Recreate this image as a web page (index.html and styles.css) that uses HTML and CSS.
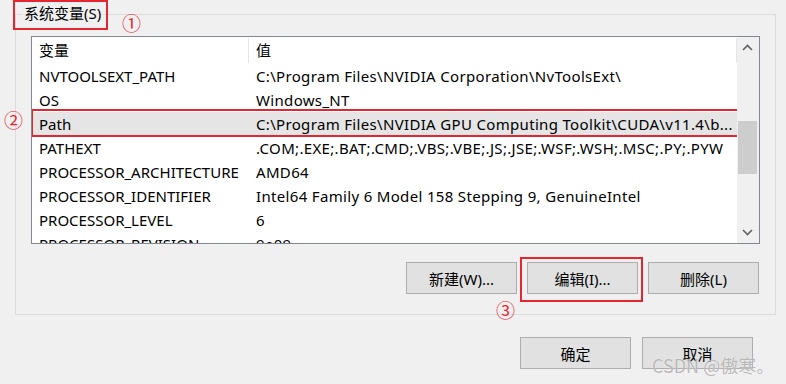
FILE: index.html
```html
<!DOCTYPE html>
<html lang="zh-CN">
<head>
    <meta charset="UTF-8">
    <meta name="viewport" content="width=device-width, initial-scale=1.0">
    <title>系统变量</title>
    <link rel="stylesheet" href="styles.css">
</head>
<body>
    <div class="janela">
        <!-- Grupo de variáveis do sistema -->
        <div class="grupo">
            <span class="titulo">系统变量(S)</span>
            <span class="marca marca-1">①</span>
            <span class="marca marca-2">②</span>

            <div class="lista">
                <div class="linhas">
                    <div class="cabecalho">
                        <div class="col-nome">变量</div>
                        <div class="col-valor">值</div>
                    </div>
                    <div class="linha"><div class="col-nome">NVTOOLSEXT_PATH</div><div class="col-valor">C:\Program Files\NVIDIA Corporation\NvToolsExt\</div></div>
                    <div class="linha"><div class="col-nome">OS</div><div class="col-valor">Windows_NT</div></div>
                    <div class="linha selecionada"><div class="col-nome">Path</div><div class="col-valor">C:\Program Files\NVIDIA GPU Computing Toolkit\CUDA\v11.4\b...</div></div>
                    <div class="linha"><div class="col-nome">PATHEXT</div><div class="col-valor">.COM;.EXE;.BAT;.CMD;.VBS;.VBE;.JS;.JSE;.WSF;.WSH;.MSC;.PY;.PYW</div></div>
                    <div class="linha"><div class="col-nome">PROCESSOR_ARCHITECTURE</div><div class="col-valor">AMD64</div></div>
                    <div class="linha"><div class="col-nome">PROCESSOR_IDENTIFIER</div><div class="col-valor">Intel64 Family 6 Model 158 Stepping 9, GenuineIntel</div></div>
                    <div class="linha"><div class="col-nome">PROCESSOR_LEVEL</div><div class="col-valor">6</div></div>
                    <div class="linha"><div class="col-nome">PROCESSOR_REVISION</div><div class="col-valor">9e09</div></div>
                </div>

                <!-- Barra de rolagem -->
                <div class="rolagem">
                    <svg class="seta" width="22" height="22" viewBox="0 0 22 22"><path d="M6 13 L10.5 8.5 L15 13" fill="none" stroke="#606060" stroke-width="1.6"/></svg>
                    <div class="polegar"></div>
                    <div class="espaco"></div>
                    <svg class="seta" width="22" height="22" viewBox="0 0 22 22"><path d="M6 9 L10.5 13.5 L15 9" fill="none" stroke="#606060" stroke-width="1.6"/></svg>
                </div>
            </div>

            <div class="botoes">
                <button>新建(W)...</button>
                <button class="destaque">编辑(I)...<span class="marca marca-3">③</span></button>
                <button>删除(L)</button>
            </div>
        </div>

        <div class="botoes-rodape">
            <button>确定</button>
            <button>取消</button>
        </div>

        <span class="marca-dagua">CSDN @傲寒。</span>
    </div>
</body>
</html>
```

FILE: styles.css
```css
/* Página */
body {
    margin: 0;
    background-color: #f0f0f0;
    font-family: "Noto Sans", "Noto Sans CJK SC", sans-serif;
    font-size: 15px;
    color: #000;
}

.janela {
    position: relative;
    width: 786px;
    height: 384px;
    overflow: hidden;
}

/* Caixa do grupo */
.grupo {
    position: relative;
    box-sizing: border-box;
    width: 761px;
    height: 301px;
    margin: 14px 0 0 15px;
    padding: 21px 15px 0 15px;
    border: 1px solid #dcdcdc;
}

.titulo {
    position: absolute;
    top: -12px;
    left: 7px;
    padding: 0 1px;
    background-color: #f0f0f0;
    line-height: 20px;
}

/* Marcações vermelhas */
.titulo::after {
    content: "";
    position: absolute;
    top: -3px;
    left: -10px;
    right: -6px;
    bottom: -7px;
    border: 2px solid #e3262f;
}

.marca {
    position: absolute;
    color: #e3262f;
    font-family: "Noto Sans CJK SC", sans-serif;
    font-size: 19px;
    line-height: 20px;
}

.marca-1 { top: -2px; left: 106px; }
.marca-2 { top: 95px; left: -12px; }
.marca-3 { top: 37px; left: -32px; }

/* Lista de variáveis */
.lista {
    display: flex;
    box-sizing: border-box;
    width: 729px;
    height: 208px;
    border: 1px solid #828790;
    background-color: #fff;
}

.linhas {
    width: 705px;
    height: 206px;
    overflow: hidden;
}

.cabecalho, .linha {
    display: grid;
    grid-template-columns: 217px 1fr;
    align-items: center;
    white-space: nowrap;
}

.cabecalho {
    height: 27px;
}

.cabecalho .col-nome, .cabecalho .col-valor {
    height: 25px;
    line-height: 25px;
    border-right: 1px solid #e5e5e5;
}

.linha {
    height: 24px;
}

.col-nome, .col-valor {
    padding-left: 7px;
    overflow: hidden;
}

.linha .col-valor {
    letter-spacing: 0.33px;
}

.selecionada {
    position: relative;
    background-color: #e5e5e5;
}

.selecionada::after {
    content: "";
    position: absolute;
    top: -3px;
    left: -1px;
    right: -3px;
    bottom: -1px;
    border: 2px solid #e3262f;
}

/* Barra de rolagem */
.rolagem {
    display: flex;
    flex-direction: column;
    width: 22px;
    background-color: #f0f0f0;
}

.seta {
    display: block;
    flex: none;
}

.polegar {
    height: 53px;
    margin: 62px 2px 0 1px;
    background-color: #cdcdcd;
}

.espaco {
    flex: 1;
}

/* Botões */
button {
    box-sizing: border-box;
    width: 111px;
    height: 32px;
    padding: 0;
    background-color: #e1e1e1;
    border: 1px solid #adadad;
    font-family: "Noto Sans", "Noto Sans CJK SC", sans-serif;
    font-size: 15px;
    color: #000;
}

.botoes {
    display: flex;
    justify-content: flex-end;
    gap: 10px;
    width: 728px;
    margin-top: 18px;
}

.destaque {
    position: relative;
}

.destaque::after {
    content: "";
    position: absolute;
    top: -6px;
    left: -8px;
    right: -6px;
    bottom: -9px;
    border: 2px solid #e3262f;
}

.botoes-rodape {
    display: flex;
    justify-content: flex-end;
    gap: 11px;
    margin-top: 22px;
    padding-right: 33px;
}

/* Marca d'água */
.marca-dagua {
    position: absolute;
    left: 652px;
    top: 354px;
    color: rgba(140, 140, 140, 0.6);
    text-shadow: 0 0 1px #fff;
    font-family: "Noto Sans CJK SC", sans-serif;
    font-size: 18px;
    line-height: 22px;
}
```
